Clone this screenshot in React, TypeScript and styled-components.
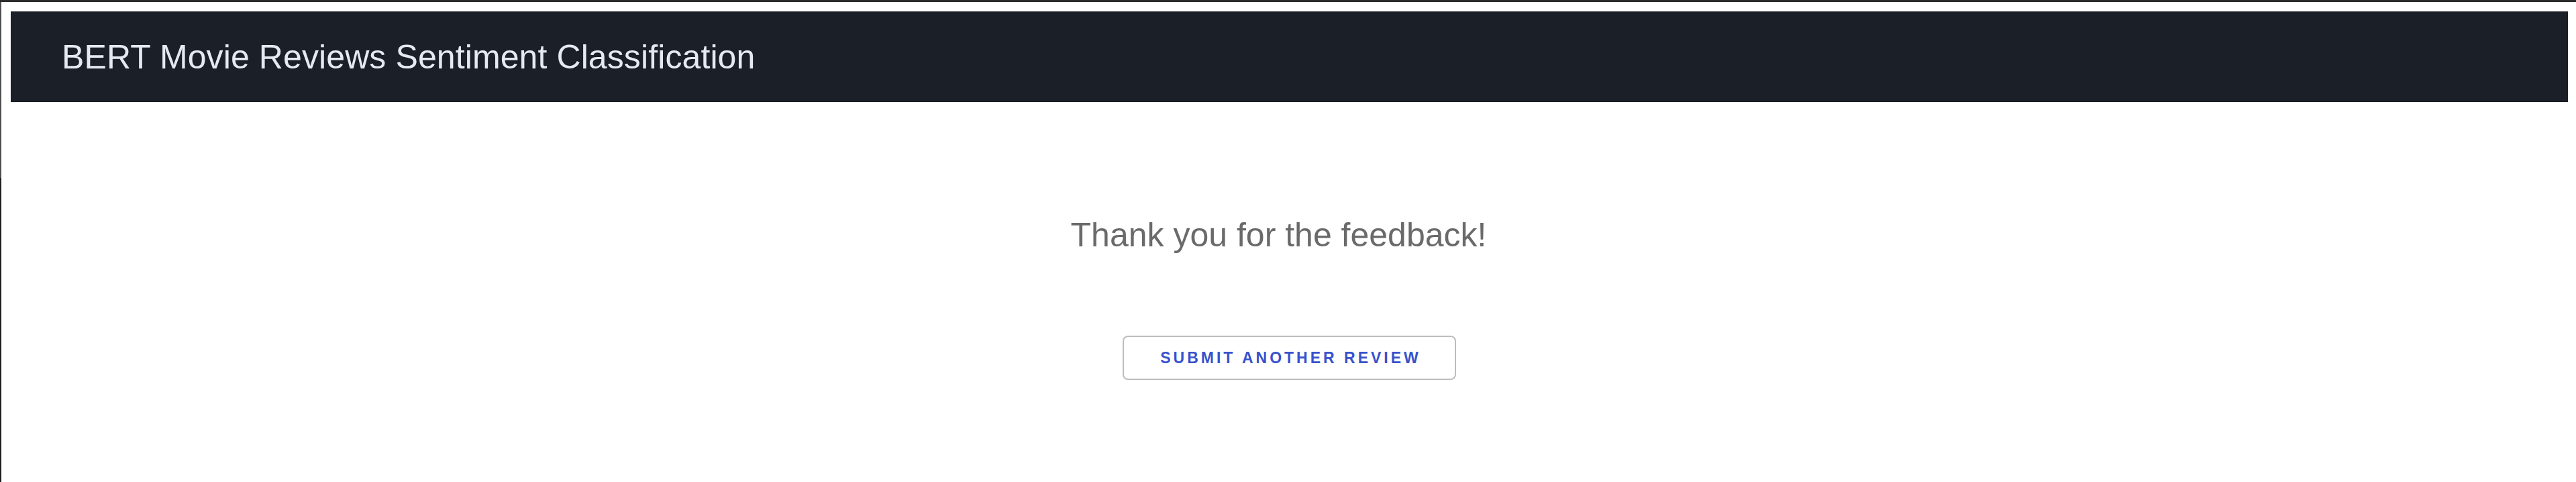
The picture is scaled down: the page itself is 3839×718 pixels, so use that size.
import React from "react";
import styled, { createGlobalStyle } from "styled-components";

const GlobalStyle = createGlobalStyle`
  html, body {
    margin: 0;
    padding: 0;
    background: #ffffff;
  }
  body {
    font-family: "Liberation Sans", Arial, sans-serif;
  }
  * { box-sizing: border-box; }
`;

const Frame = styled.div`
  min-height: 100vh;
  border-top: 3px solid #2c2c2c;
  padding: 14px 12px 0 16px;
  background:
    linear-gradient(to bottom, #4f4f4f 0, #4f4f4f 262px, #1f1f1f 262px) left top / 2px 100% no-repeat,
    #ffffff;
`;

const Header = styled.header`
  background: #1b1f27;
  padding: 43px 0 42px 76px;
`;

const HeaderTitle = styled.h1`
  margin: 0;
  font-family: "Liberation Sans", Arial, sans-serif;
  font-weight: 400;
  font-size: 50px;
  line-height: 50px;
  letter-spacing: 0.1px;
  color: #e5e9f2;
`;

const Main = styled.main`
  display: flex;
  flex-direction: column;
  align-items: center;
  padding-top: 173px;
`;

const Message = styled.p`
  margin: 0 32px 0 0;
  font-family: "Liberation Sans", Arial, sans-serif;
  font-size: 50px;
  line-height: 50px;
  color: #6a6a6a;
`;

const OutlineButton = styled.button`
  margin-top: 125px;
  width: 497px;
  height: 66px;
  padding: 0 0 0 4px;
  background: #ffffff;
  border: 2px solid #bdbdbd;
  border-radius: 8px;
  font-family: "Liberation Sans", Arial, sans-serif;
  font-weight: 700;
  font-size: 23px;
  letter-spacing: 4px;
  text-transform: uppercase;
  color: #3852cc;
  cursor: pointer;
`;

export default function App() {
  return (
    <>
      <GlobalStyle />
      <Frame>
        <Header>
          <HeaderTitle>BERT Movie Reviews Sentiment Classification</HeaderTitle>
        </Header>
        <Main>
          <Message>Thank you for the feedback!</Message>
          <OutlineButton type="button">Submit another review</OutlineButton>
        </Main>
      </Frame>
    </>
  );
}
